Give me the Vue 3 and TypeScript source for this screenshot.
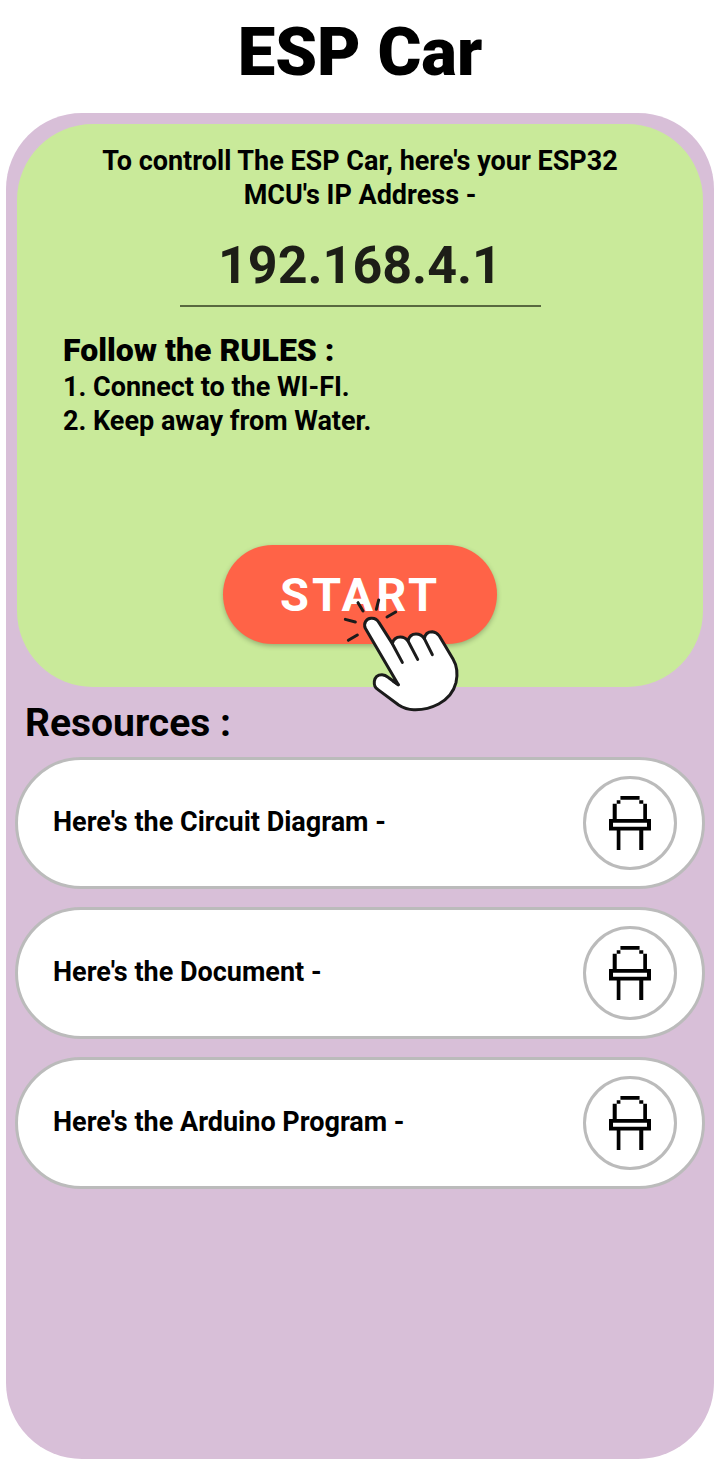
<script setup lang="ts">
interface Resource {
  id: string
  label: string
}

const ipAddress: string = '192.168.4.1'
const rules: string[] = ['1. Connect to the WI-FI.', '2. Keep away from Water.']
const resources: Resource[] = [
  { id: 'circuit', label: "Here's the Circuit Diagram -" },
  { id: 'document', label: "Here's the Document -" },
  { id: 'program', label: "Here's the Arduino Program -" },
]
</script>

<template>
  <div class="page">
    <h1 class="title">ESP Car</h1>
    <main class="panel">
      <section class="card">
        <p class="intro">To controll The ESP Car, here's your ESP32 MCU's IP Address -</p>
        <p class="ip">{{ ipAddress }}</p>
        <hr class="rule" />
        <h2 class="rules-title">Follow the RULES :</h2>
        <ul class="rules">
          <li v-for="rule in rules" :key="rule">{{ rule }}</li>
        </ul>
        <div class="start-wrap">
          <button class="start" type="button">START</button>
          <svg class="hand" viewBox="0 0 420 390" aria-hidden="true">
            <g fill="none" stroke="#1b1b1b" stroke-width="9" stroke-linecap="round" stroke-linejoin="round">
              <path d="M84 38 99 63M146 30 139 58M197 66 171 81M46 88 76 96M55 151 82 135" />
              <path
                fill="#fff"
                d="M205 284 106 115C99 98 110 86 123 85C134 84 142 89 147 98L187 161C190 148 199 141 211 141C221 141 229 146 234 153C237 140 246 132 258 132C269 132 277 137 283 146C285 132 295 125 307 125C317 126 323 131 328 138L369 207C382 229 384 251 378 278C371 306 352 328 326 342C301 355 278 360 251 359C233 359 220 354 206 345L143 298C134 292 132 284 133 274C135 260 144 254 156 254C163 254 170 258 176 263Z"
              />
              <path d="M187 161 217 217M234 153 263 208M283 146 307 194M190 274 205 284" />
            </g>
          </svg>
        </div>
      </section>

      <h2 class="resources-title">Resources :</h2>
      <ul class="resources">
        <li v-for="item in resources" :key="item.id" class="resource">
          <span :id="item.id" class="label">{{ item.label }}</span>
          <a class="round" :href="'#' + item.id" :aria-labelledby="item.id">
            <svg class="led" viewBox="103 79 125 160" aria-hidden="true">
              <path
                fill="#000"
                fill-rule="evenodd"
                d="M137 79h57v11h-57zM126 91h11v11h-11zM193 91h12v11h-12zM114 102h12v45h-12zM205 102h11v45h-11zM103 147h125v34h-125zM115 158v12h101v-12zM126 181h11v58h-11zM193 181h12v58h-12z"
              />
            </svg>
          </a>
        </li>
      </ul>
    </main>
  </div>
</template>

<style>
body {
  margin: 0;
  background: #fff;
}
</style>

<style scoped>
.page {
  box-sizing: border-box;
  display: flex;
  flex-direction: column;
  min-height: 100vh;
  padding: 0 6px 6px;
  font-family: Roboto, 'Liberation Sans', sans-serif;
  font-weight: 700;
  font-size: 27px;
  line-height: 34px;
  color: #000;
}

h1,
h2,
p,
ul {
  margin: 0;
  padding: 0;
}

ul {
  list-style: none;
}

.title {
  padding: 12px 0 21px;
  font-size: 67px;
  font-weight: 900;
  line-height: 80px;
  text-align: center;
}

.panel {
  flex: 1;
  padding: 11px 9px;
  border-radius: 76px;
  background: #d8bfd8;
}

.card {
  margin: 0 2px;
  padding: 20px 46px 43px;
  border-radius: 76px;
  background: #c9ea9a;
}

.intro {
  max-width: 540px;
  margin: 0 auto;
  text-align: center;
}

.ip {
  margin-top: 22px;
  font-size: 52px;
  line-height: 64px;
  text-align: center;
  color: #1d1e17;
}

.rule {
  width: 361px;
  max-width: 100%;
  height: 2px;
  margin: 7px auto 25px;
  border: 0;
  background: #58693f;
}

.rules-title {
  margin-bottom: 2px;
  font-size: 32px;
  font-weight: 900;
  line-height: 36px;
}

.start-wrap {
  position: relative;
  width: 274px;
  margin: 107px auto 0;
}

.start {
  display: block;
  width: 100%;
  height: 99px;
  padding: 0;
  border: 0;
  border-radius: 50px;
  background: #ff6347;
  box-shadow: 0 2px 5px rgba(0, 0, 0, 0.25);
  color: #fff;
  font: inherit;
  font-size: 47px;
  letter-spacing: 3px;
  cursor: pointer;
}

.hand {
  position: absolute;
  top: 45px;
  left: 107px;
  width: 140px;
  height: 130px;
  pointer-events: none;
}

.resources-title {
  margin: 14px 10px 12px;
  font-size: 39px;
  line-height: 44px;
}

.resources {
  display: flex;
  flex-direction: column;
  gap: 18px;
}

.resource {
  box-sizing: border-box;
  display: flex;
  align-items: center;
  justify-content: space-between;
  min-height: 132px;
  padding: 16px 25px 16px 35px;
  border: 3px solid #bbb;
  border-radius: 66px;
  background: #fff;
}

.label {
  padding-bottom: 2px;
}

.round {
  box-sizing: border-box;
  display: flex;
  flex: none;
  align-items: center;
  justify-content: center;
  width: 94px;
  height: 94px;
  border: 3px solid #bbb;
  border-radius: 50%;
}

.led {
  width: 42px;
  height: 54px;
}
</style>
